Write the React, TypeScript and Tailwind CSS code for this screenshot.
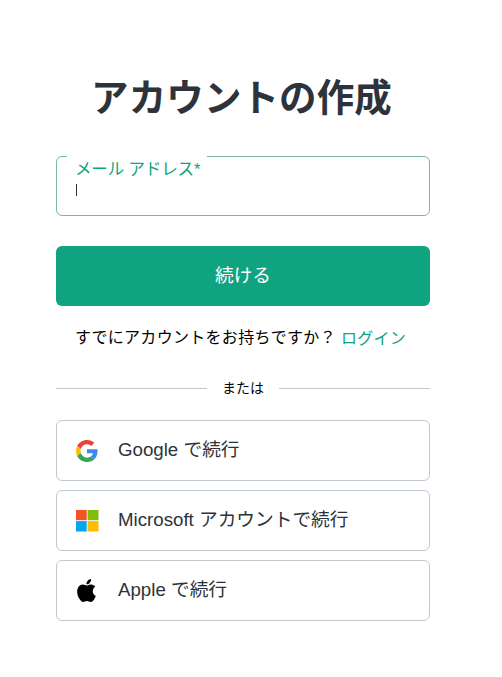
"use client";

import { useState } from "react";

function GoogleLogo() {
  return (
    <svg viewBox="0 0 48 48" className="m-px h-[22px] w-[22px]">
      <path fill="#EA4335" d="M24 9.5c3.54 0 6.71 1.22 9.21 3.6l6.85-6.85C35.9 2.38 30.47 0 24 0 14.62 0 6.51 5.38 2.56 13.22l7.98 6.19C12.43 13.72 17.74 9.5 24 9.5z" />
      <path fill="#4285F4" d="M46.98 24.55c0-1.57-.15-3.09-.38-4.55H24v9.02h12.94c-.58 2.96-2.26 5.48-4.78 7.18l7.73 6c4.51-4.18 7.09-10.36 7.09-17.65z" />
      <path fill="#FBBC05" d="M10.53 28.59c-.48-1.45-.76-2.99-.76-4.59s.27-3.14.76-4.59l-7.98-6.19C.92 16.46 0 20.12 0 24c0 3.88.92 7.54 2.56 10.78l7.97-6.19z" />
      <path fill="#34A853" d="M24 48c6.48 0 11.93-2.13 15.89-5.81l-7.73-6c-2.15 1.45-4.92 2.3-8.16 2.3-6.26 0-11.57-4.22-13.47-9.91l-7.98 6.19C6.51 42.62 14.62 48 24 48z" />
    </svg>
  );
}

function MicrosoftLogo() {
  return (
    <svg viewBox="0 0 24 24" className="h-6 w-6">
      <path fill="#F35325" d="M1 1h10.7v10.2H1z" />
      <path fill="#81BC06" d="M12.6 1h10.9v10.2H12.6z" />
      <path fill="#05A6F0" d="M1 12.1h10.7v10.4H1z" />
      <path fill="#FFBA08" d="M12.6 12.1h10.9v10.4H12.6z" />
    </svg>
  );
}

function AppleLogo() {
  return (
    <svg viewBox="0 0 24 24" className="mr-px h-[23px] w-[23px]">
      <path fill="#000" d="M12.152 6.896c-.948 0-2.415-1.078-3.96-1.04-2.04.027-3.91 1.183-4.961 3.014-2.117 3.675-.546 9.103 1.519 12.09 1.013 1.454 2.208 3.09 3.792 3.039 1.52-.065 2.09-.987 3.935-.987 1.831 0 2.35.987 3.96.948 1.637-.026 2.676-1.48 3.676-2.948 1.156-1.688 1.636-3.325 1.662-3.415-.039-.013-3.182-1.221-3.22-4.857-.026-3.04 2.48-4.494 2.597-4.559-1.429-2.09-3.623-2.324-4.39-2.376-2-.156-3.675 1.09-4.61 1.09zM15.53 3.83c.843-1.012 1.4-2.427 1.245-3.83-1.207.052-2.662.805-3.532 1.818-.78.896-1.454 2.338-1.273 3.714 1.338.104 2.715-.688 3.559-1.701" />
    </svg>
  );
}

const providers = [
  { label: "Google で続行", Logo: GoogleLogo },
  { label: "Microsoft アカウントで続行", Logo: MicrosoftLogo },
  { label: "Apple で続行", Logo: AppleLogo },
];

export default function App() {
  const [email, setEmail] = useState("");

  return (
    <main className="h-[677px] w-[502px] bg-white pl-14 pt-[72px] font-['Liberation_Sans','Noto_Sans_CJK_JP',sans-serif] text-[#2d333a]">
      <section className="w-[374px]">
        <h1 className="h-[84px] whitespace-nowrap pr-[3px] text-center text-[37.5px] font-bold leading-[53px] tracking-[0.1px]">
          アカウントの作成
        </h1>

        <label className="relative block h-[60px] rounded-md border border-[#7ab5a8] px-[19px] pt-[22px]">
          <span className="absolute -top-[3px] left-[10px] w-[140px] whitespace-nowrap bg-white px-2 text-[16.5px] leading-[30px] tracking-[-0.15px] text-[#10a37f]">
            メール アドレス*
          </span>
          {email === "" && <span className="mt-[2px] block h-[15px] w-px bg-[#2d333a]" />}
          <input
            className="absolute inset-x-5 bottom-2 h-6 bg-transparent outline-none"
            value={email}
            onChange={(e) => setEmail(e.target.value)}
          />
        </label>

        <button className="mt-[30px] block h-[60px] w-full rounded-md bg-[#10a37f] text-[18.7px] text-white">
          続ける
        </button>

        <p className="mt-[18px] flex h-7 items-center gap-[5px] whitespace-nowrap pl-[19px] text-base tracking-[0.3px] text-black">
          すでにアカウントをお持ちですか？
          <a href="#" className="pt-px text-[#10a37f]">ログイン</a>
        </p>

        <div className="mt-[26px] flex h-5 items-center text-sm text-black">
          <span className="h-px flex-1 bg-[#c2c8d0]" />
          <span className="w-[72px] text-center">または</span>
          <span className="h-px flex-1 bg-[#c2c8d0]" />
        </div>

        <div className="mt-[22px] flex flex-col gap-[9px]">
          {providers.map(({ label, Logo }) => (
            <button
              key={label}
              className="flex h-[61px] items-center gap-[19px] whitespace-nowrap rounded-md border border-[#c2c8d0] pl-[18px] text-[18.7px]"
            >
              <Logo />
              {label}
            </button>
          ))}
        </div>
      </section>
    </main>
  );
}
